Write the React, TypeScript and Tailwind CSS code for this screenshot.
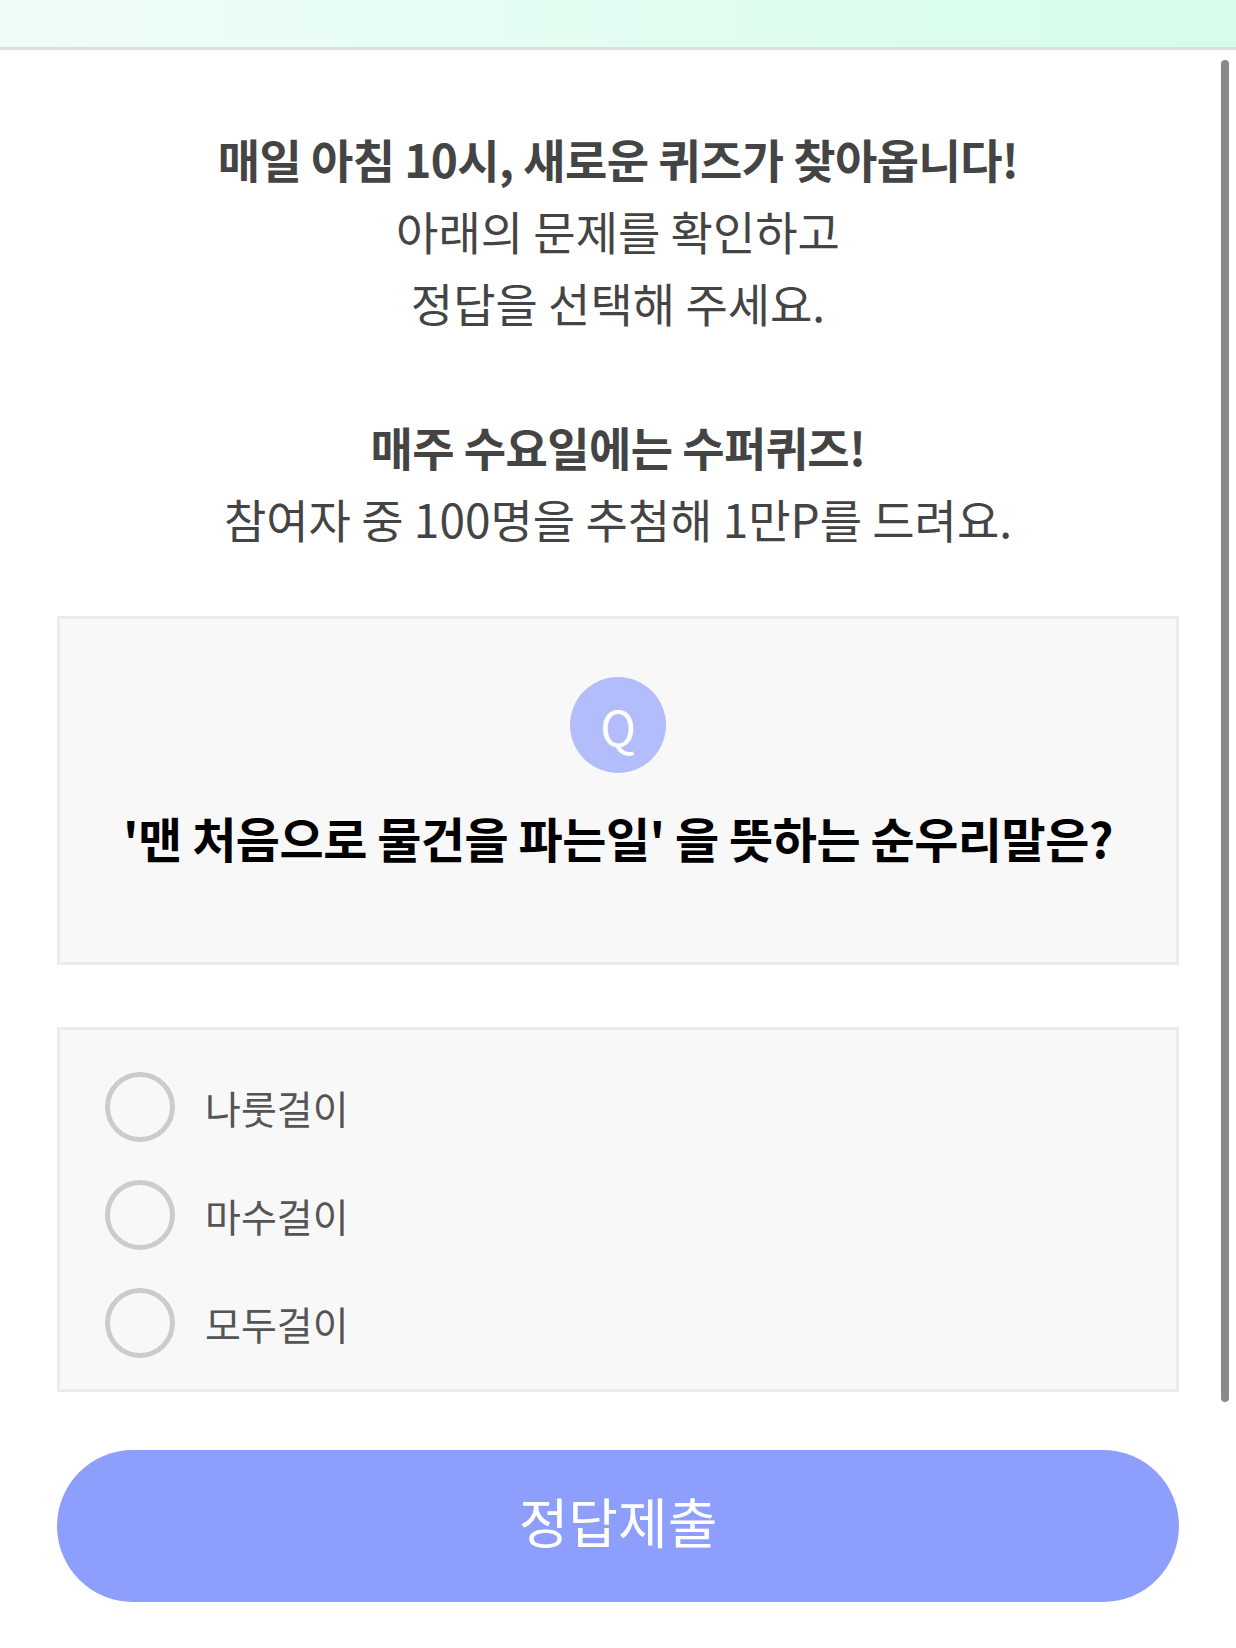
import { useState } from 'react'

const options = ['나룻걸이', '마수걸이', '모두걸이']

export default function App() {
  const [picked, setPicked] = useState<number | null>(null)

  return (
    <div
      className="relative min-h-[1648px] w-[1236px] bg-white"
      style={{ fontFamily: '"Noto Sans CJK KR", "Noto Sans", sans-serif' }}
    >
      {/* top band */}
      <div className="h-[50px] border-b-[3px] border-[#dedede] bg-gradient-to-r from-[#effdf7] to-[#d5fdea]" />

      {/* overlay scrollbar */}
      <div className="absolute top-[60px] left-[1221px] h-[1342px] w-[8px] rounded-full bg-[#8a8a8a]" />

      <div className="px-[57px] pt-[72px]">
        <div className="text-center text-[46px] leading-[72px] text-[#444]">
          <p className="font-bold tracking-[-0.6px]">매일 아침 10시, 새로운 퀴즈가 찾아옵니다!</p>
          <p>아래의 문제를 확인하고</p>
          <p>정답을 선택해 주세요.</p>
          <p className="mt-[72px] font-bold tracking-[-0.6px]">매주 수요일에는 수퍼퀴즈!</p>
          <p>참여자 중 100명을 추첨해 1만P를 드려요.</p>
        </div>

        <div className="mt-[62px] flex h-[349px] flex-col items-center border-[3px] border-[#ebebeb] bg-[#f8f8f8] pt-[58px]">
          <div className="flex h-[96px] w-[96px] items-center justify-center rounded-full bg-[#b4bdfb] text-[48px] text-white">
            Q
          </div>
          <p className="mt-[36px] text-[48px] leading-[56px] font-bold tracking-[-0.5px] text-black">
            '맨 처음으로 물건을 파는일' 을 뜻하는 순우리말은?
          </p>
        </div>

        <div className="mt-[62px] flex h-[365px] flex-col border-[3px] border-[#ebebeb] bg-[#f8f8f8] px-[45px] pt-[23px]">
          {options.map((o, i) => (
            <button
              key={o}
              type="button"
              onClick={() => setPicked(i)}
              className="flex h-[108px] items-center gap-[30px] text-left"
            >
              <span className="flex h-[70px] w-[70px] flex-none items-center justify-center rounded-full border-[5px] border-[#cccccc]">
                {picked === i && <span className="h-[36px] w-[36px] rounded-full bg-[#8e9efc]" />}
              </span>
              <span className="text-[39px] text-[#555]">{o}</span>
            </button>
          ))}
        </div>

        <button
          type="button"
          className="mt-[58px] flex h-[152px] w-full items-center justify-center rounded-full bg-[#8e9efc] pb-[12px] text-[54px] text-white"
        >
          정답제출
        </button>
      </div>
    </div>
  )
}
